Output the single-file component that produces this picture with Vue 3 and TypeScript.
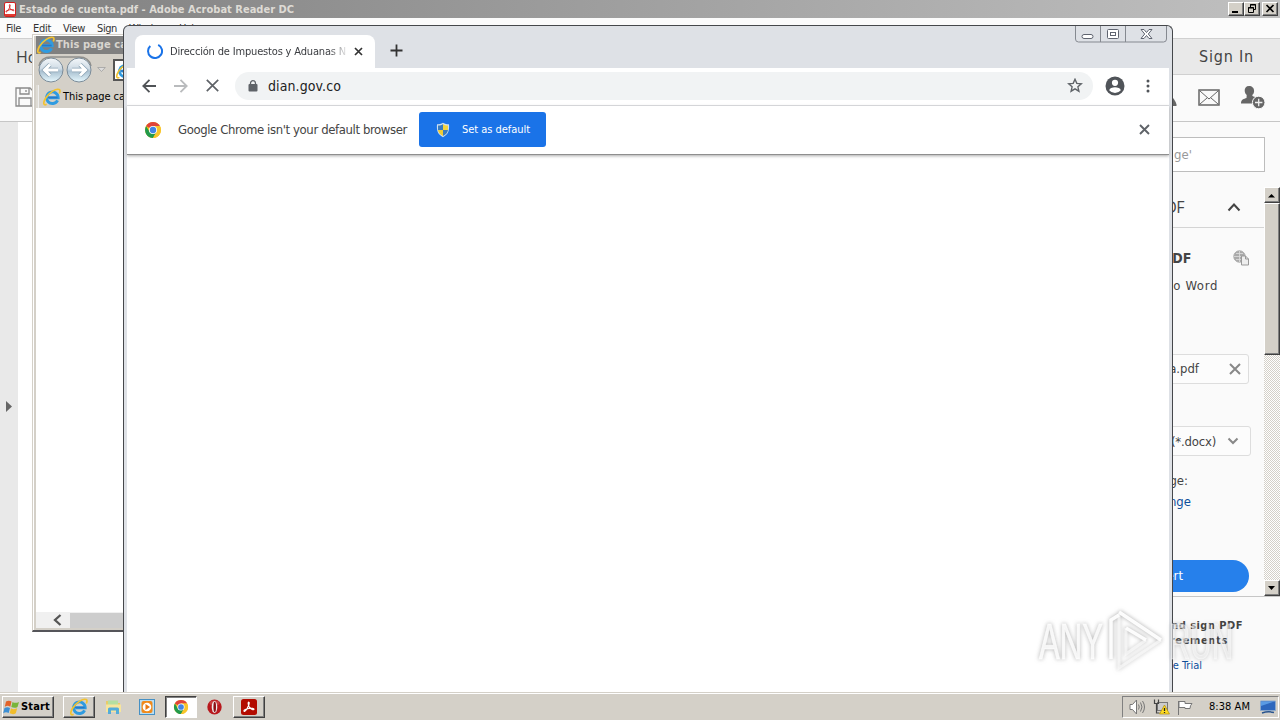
<script setup lang="ts">
interface MenuItem { label: string; width: number }

const menus: MenuItem[] = [
  { label: 'File', width: 15 },
  { label: 'Edit', width: 18 },
  { label: 'View', width: 22 },
  { label: 'Sign', width: 20 },
  { label: 'Window', width: 38 },
  { label: 'Help', width: 20 },
]

// Tracks a label so that it spans the given number of pixels.
function fit(el: HTMLElement, width: number) {
  el.style.letterSpacing = '0px'
  const natural = el.getBoundingClientRect().width
  const count = (el.textContent ?? '').length
  if (count > 0) el.style.letterSpacing = `${(width - natural) / count}px`
}
const vFit = { mounted: (el: HTMLElement, b: { value: number }) => fit(el, b.value) }
</script>

<template>
  <div class="desktop">
    <svg class="defs" width="0" height="0">
      <defs>
        <linearGradient id="ball" x1="0" y1="0" x2="0" y2="1">
          <stop offset="0" stop-color="#f4f7fa" /><stop offset=".45" stop-color="#cfdbe5" />
          <stop offset=".55" stop-color="#a9c0d0" /><stop offset="1" stop-color="#e6f8fe" />
        </linearGradient>
        <symbol id="ie" viewBox="0 0 18 18">
          <path d="M14.600 12.300A5.800 5.800 0 1 1 15.200 9.700H5.500" fill="none" stroke="#2f9be0" stroke-width="2.900" />
          <path d="M14.600 9.500H5" stroke="#2878c8" stroke-width="1.600" />
          <path d="M3.600 16.300C.2 18.200 0 14.500 2.400 10.500 5.800 4.800 12.800.2 16.200 1.500c1.400.7.800 2.400.1 4" fill="none" stroke="#f2c230" stroke-width="1.700" />
        </symbol>
        <symbol id="chrome" viewBox="0 0 18 18">
          <circle cx="9" cy="9" r="8" fill="#fbc116" />
          <path d="M9 9 2.100 5A8 8 0 0 1 15.900 5H9z" fill="#e0443a" />
          <path d="M9 9 5.600 11 2.100 5A8 8 0 0 0 9 17l3.400-6z" fill="#229a4c" />
          <path d="M9 5h6.900A8 8 0 0 1 9 17l3.400-6z" fill="#f7c52c" />
          <circle cx="9" cy="9" r="4" fill="#fff" /><circle cx="9" cy="9" r="3.200" fill="#4285e4" />
        </symbol>
        <symbol id="pdf" viewBox="0 0 18 18">
          <path d="M8.700 3.600c1.400.2-.1 4.100-1.800 7-1.300 2.200-3.100 4-3.600 3-.5-1.100 2.700-2.400 5.500-2.900 3-.5 6-.2 5.800.9-.3 1.100-3.400.1-5.200-2.400C8.100 7.300 7.600 3.500 8.700 3.600z" fill="none" stroke="currentColor" stroke-width="1.300" />
        </symbol>
      </defs>
    </svg>

    <section class="acrobat">
      <header class="ac-title">
        <svg class="ac-logo" width="12" height="15" viewBox="0 0 12 15"><rect x=".5" y=".5" width="11" height="14" rx="1.500" fill="#fff" stroke="#d21f1f" /><rect x="1" y="12" width="10" height="2" fill="#e23a30" /><use href="#pdf" x="-1" y="0" width="14" height="13" color="#d21f1f" /></svg>
        <span v-fit="275" class="bold">Estado de cuenta.pdf - Adobe Acrobat Reader DC</span>
        <div class="winbtns">
          <i class="raised"><svg width="14" height="12"><path d="M3 9h6" stroke="#000" stroke-width="2" /></svg></i>
          <i class="raised"><svg width="14" height="12"><path d="M5.500 4V1.500h5v5H9M5 2h6M3.500 4.500h5v5h-5zM3 5h6" fill="none" stroke="#000" /></svg></i>
          <i class="raised gap"><svg width="14" height="12"><path d="m3.500 2 7 7m0-7-7 7" stroke="#000" stroke-width="1.700" /></svg></i>
        </div>
      </header>
      <nav class="ac-menu">
        <span v-for="m in menus" :key="m.label" v-fit="m.width">{{ m.label }}</span>
      </nav>
      <div class="ac-tabs"><span class="home">Home</span><span v-fit="55" class="signin">Sign In</span></div>
      <div class="ac-tools">
        <svg class="save" width="20" height="20" viewBox="0 0 20 20" fill="none" stroke="#8a8a8a" stroke-width="1.300"><path d="M1 1h14l4 4v14H1zM5 1v6h9V1M4 19v-8h12v8M11 3v2" /></svg>
        <span class="grow"></span>
        <svg width="12" height="18" viewBox="0 0 12 18"><path d="M5 7q5 4 6.500 9.500V18H0V7z" fill="#666" /></svg>
        <svg class="mail" width="22" height="17" viewBox="0 0 22 17" fill="none" stroke="#666" stroke-width="1.500"><path d="M1 1h20v15H1z" /><path d="m2 2 9 8 9-8M2 15l7-6M20 15l-7-6" stroke-width="1" /></svg>
        <svg class="person" width="25" height="24" viewBox="0 0 25 24"><path d="M9 1c-3 0-4.500 2-4.300 5 .2 2 1 3 2 4l-.2 3C4 14 1 14 1 18.500h12.500l3-6c-1-.2-3-1-4-1.500l-.2-1c1-1 1.800-2 1.800-4C14.200 3 12 1 9 1z" fill="#666" /><circle cx="18.700" cy="17.500" r="6.300" fill="#666" stroke="#fafafa" /><path d="M15 17.500h7.400m-3.700-3.700v7.400" stroke="#eee" stroke-width="1.300" /></svg>
      </div>
      <div class="ac-body">
        <aside class="ac-rail"><svg width="7" height="11"><path d="M1 0v11l6-5.500z" fill="#666" /></svg></aside>
        <main class="ac-doc"></main>
        <aside class="ac-panel">
          <div class="search">ge'</div>
          <div class="p-scroll">
            <div class="p-content">
              <div class="p-head"><span class="pdf-h">PDF</span><svg width="14" height="10"><path d="m1.500 8.500 5.500-6 5.500 6" fill="none" stroke="#444" stroke-width="2" /></svg></div>
              <div class="p-title"><b>PDF</b><svg width="17" height="16" viewBox="0 0 17 16"><circle cx="6.500" cy="6.500" r="5.700" fill="#aaa" stroke="#aaa" /><path d="M1 6.500h11M6.500 1v11M3 3.500h7M3 9.500h7" stroke="#ddd" stroke-width=".8" /><path d="M8.500 6h4l3 3v6h-7z" fill="#eee" stroke="#999" /><path d="M12.500 6v3h3" fill="none" stroke="#999" /></svg></div>
              <div class="p-word"><span v-fit="50">to Word</span></div>
              <div class="p-file"><span>a.pdf</span><svg width="12" height="12"><path d="m1 1 10 10m0-10L1 11" stroke="#888" stroke-width="2" /></svg></div>
              <div class="p-select"><span v-fit="45">(*.docx)</span><svg width="12" height="8"><path d="m1.500 1.500 4.500 4.500 4.500-4.500" fill="none" stroke="#888" stroke-width="2" /></svg></div>
              <div class="p-lang">age:</div>
              <div class="p-change">Change</div>
              <div class="convert">Convert</div>
            </div>
            <div class="vbar"><i class="raised"><svg width="8" height="5"><path d="M0 4.500h7L3.500 1z" /></svg></i><i class="raised thumb"></i><span></span><i class="raised"><svg width="8" height="5"><path d="M0 0h7L3.500 4z" /></svg></i></div>
          </div>
          <footer class="p-foot"><b><span v-fit="79">and sign PDF</span></b><b class="agree"><span v-fit="66">greements</span></b><a>Free Trial</a></footer>
        </aside>
      </div>
    </section>

    <section class="explorer">
      <header class="ie-title"><svg width="18" height="18"><use href="#ie" /></svg><span v-fit="71" class="bold">This page ca</span></header>
      <div class="ie-nav">
        <svg width="56" height="28" viewBox="0 0 56 28">
          <path d="M2 10Q4 1 14 1h28q10 0 12 9" fill="none" stroke="#8f8f8c" stroke-width="1.500" />
          <circle cx="14" cy="14" r="12" fill="url(#ball)" stroke="#7c8c99" /><circle cx="42" cy="14" r="12" fill="url(#ball)" stroke="#7c8c99" />
          <path d="M7 14h14M13 8.500 7.500 14l5.500 5.500" fill="none" stroke="#8aa2b4" stroke-width="4.500" /><path d="M7 14h14M13 8.500 7.500 14l5.500 5.500" fill="none" stroke="#fff" stroke-width="3" />
          <path d="M35 14h14M43 8.500l5.500 5.500-5.500 5.500" fill="none" stroke="#8aa2b4" stroke-width="4.500" /><path d="M35 14h14M43 8.500l5.500 5.500-5.500 5.500" fill="none" stroke="#fff" stroke-width="3" />
        </svg>
        <svg class="drop" width="9" height="6"><path d="M.7.500h7.600l-3.800 4z" fill="#ddd" stroke="#999" stroke-width=".7" /></svg>
        <div class="ie-addr"><svg width="17" height="17"><use href="#ie" /></svg></div>
      </div>
      <div class="ie-tabs"><div class="ie-tab"><svg width="18" height="18"><use href="#ie" /></svg><span v-fit="62">This page ca</span></div></div>
      <div class="ie-page"></div>
      <div class="ie-hbar"><svg width="10" height="12"><path d="M8.500 1 3 6l5.500 5" fill="none" stroke="#555" stroke-width="2.300" /></svg><i></i></div>
    </section>

    <section class="browser">
      <header class="strip">
        <div class="tab">
          <svg class="spin" width="16" height="16" viewBox="0 0 16 16"><path d="M3.300 2.900A7 7 0 1 0 11.200 1.800" fill="none" stroke="#1a73e8" stroke-width="2" /></svg>
          <span class="tabname"><span v-fit="176">Dirección de Impuestos y Aduanas N</span></span>
          <svg class="tabx" width="9" height="9"><path d="m1 1 7 7m0-7-7 7" stroke="#333" stroke-width="1.700" /></svg>
        </div>
        <svg class="plus" width="13" height="13"><path d="M6.500.500v12M.500 6.500h12" stroke="#333" stroke-width="1.800" /></svg>
        <div class="caption">
          <svg width="92" height="17" viewBox="0 0 92 17" fill="none" stroke="#5f6470"><path d="M.500 0v13q0 3 3 3h85q3 0 3-3V0M25.500 0v16M50.500 0v16" stroke="#858990" /><rect x="7" y="8.500" width="11" height="4" rx="2" fill="#fff" /><rect x="32.500" y="3.500" width="11" height="9" rx="1" fill="#fff" /><rect x="35.500" y="6.500" width="5" height="3" /><path d="M66 3.500h3l2.500 3 2.500-3h3l-3.700 4.500 3.700 4.500h-3l-2.500-3-2.500 3h-3L69.700 8z" fill="#fff" /></svg>
        </div>
      </header>
      <div class="inner">
        <div class="toolbar">
          <svg class="b" width="14" height="14" fill="none" stroke="#505357" stroke-width="1.800"><path d="M14 7H1.500M7.500.8 1.300 7l6.200 6.200" /></svg>
          <svg class="f" width="14" height="14" fill="none" stroke="#b9bbbd" stroke-width="1.800"><path d="M0 7h12.500M6.500.8 12.700 7l-6.200 6.200" /></svg>
          <svg class="s" width="13" height="13"><path d="m.8.800 11.400 11.400m0-11.400L.8 12.200" stroke="#5f6368" stroke-width="1.700" /></svg>
          <div class="omni">
            <svg width="10" height="12"><rect x=".5" y="4" width="9" height="7.500" rx="1" fill="#5f6368" /><path d="M2.500 5V3.200a2.500 2.500 0 0 1 5 0V5" fill="none" stroke="#5f6368" stroke-width="1.300" /></svg>
            <span class="url"><span v-fit="73">dian.gov.co</span></span>
            <svg width="16" height="15" viewBox="0 0 16 15"><path d="m8 1.300 1.800 4.100 4.500.4-3.400 3 1 4.400L8 10.900l-3.900 2.300 1-4.400-3.400-3 4.500-.4z" fill="none" stroke="#5f6368" stroke-width="1.400" /></svg>
          </div>
          <svg class="user" width="20" height="20"><circle cx="10" cy="10" r="9.500" fill="#505459" /><circle cx="10" cy="6.800" r="3.100" fill="#fff" /><path d="M4.200 14.200c1-3.800 10.600-3.800 11.600 0a7.500 7.500 0 0 1-11.600 0z" fill="#fff" /></svg>
          <svg class="dots" width="4" height="14" fill="#505459"><circle cx="2" cy="2" r="1.500" /><circle cx="2" cy="7" r="1.500" /><circle cx="2" cy="12" r="1.500" /></svg>
        </div>
        <div class="infobar">
          <svg width="18" height="18"><use href="#chrome" /></svg>
          <span class="msg"><span v-fit="229">Google Chrome isn't your default browser</span></span>
          <button>
            <svg width="14" height="16" viewBox="0 0 14 16"><path d="M7 .7C5 2 3 2.300 1 2.300c-.5 6 .5 10 6 13 5.500-3 6.500-7 6-13-2 0-4-.3-6-1.600z" fill="#cfe0ef" /><path d="M7 2v6H2V3.500C4 3.500 6 3 7 2z" fill="#397cc0" /><path d="M7 2v6h5V3.500C10 3.500 8 3 7 2z" fill="#f5d53e" /><path d="M2 8h5v6C4 12.500 2.300 10.500 2 8z" fill="#f0cc35" /><path d="M12 8H7v6c3-1.500 4.700-3.500 5-6z" fill="#397cc0" /></svg>
            <span v-fit="68">Set as default</span>
          </button>
          <svg class="close" width="11" height="11"><path d="m1 1 9 9m0-9-9 9" stroke="#5f6368" stroke-width="1.900" /></svg>
        </div>
        <div class="page"></div>
      </div>
    </section>

    <footer class="taskbar">
      <div class="raised start">
        <svg width="17" height="17" viewBox="0 0 17 17"><path d="M3 2.500c2-1.300 4-1 5.500 0L7.300 7.700c-2-1.200-3.500-1-5.500 0z" fill="#e2632a" /><path d="M9.500 3c2 1.300 4 1 6.500 0l-1.500 5c-2 1.200-4 1-6.200 0z" fill="#79b53a" /><path d="M1.500 9c2-1.300 4-1 5.500 0l-1.300 5c-2-1-3.500-1-5.500.2z" fill="#3c8fd4" /><path d="M8 9.300c2 1.200 4 1 6.200 0l-1.400 5c-2 1.200-4 1-6.100 0z" fill="#f1bd2b" /></svg>
        <span v-fit="29" class="bold">Start</span>
      </div>
      <div class="raised task ie-task"><svg width="18" height="18"><use href="#ie" /></svg></div>
      <svg class="folder" width="17" height="18" viewBox="0 0 17 18"><path d="M1 3h5l1 2h8v9H1z" fill="#e9cb69" /><path d="M3 2.500h10V8H3z" fill="#b5dfa0" /><path d="M1 6.500h15V14H1z" fill="#f7e59c" /><path d="M3 16v-5q0-1.500 1.500-1.500h8Q14 9.500 14 11v5h-3v-3.500H6V16z" fill="#54acd9" /></svg>
      <svg class="media" width="16" height="16"><rect x=".5" y=".5" width="15" height="15" fill="#b9def3" stroke="#4690c4" /><rect x="2.500" y="2" width="11" height="12" rx="2" fill="#f08a1c" /><circle cx="8" cy="8" r="4.300" fill="#fff" /><path d="m6.500 5 4.500 3-4.500 3z" fill="#e87812" /></svg>
      <div class="task pressed"><svg width="16" height="16"><use href="#chrome" /></svg></div>
      <svg class="opera" width="15" height="16"><ellipse cx="7.500" cy="8" rx="7.200" ry="7.500" fill="#b8181d" /><ellipse cx="7.500" cy="4" rx="5" ry="2.500" fill="#d65757" opacity=".6" /><ellipse cx="7.500" cy="8" rx="2.800" ry="6" fill="#eee" /><ellipse cx="7.700" cy="8" rx="1.300" ry="5.200" fill="#8e0f14" /></svg>
      <div class="raised task ac-task"><svg width="16" height="16"><rect width="16" height="16" rx="2.500" fill="#b30b00" /><use href="#pdf" x="0" y="-.5" width="16" height="17" color="#fff" /></svg></div>
      <div class="tray">
        <svg width="17" height="16" viewBox="0 0 17 16" fill="none" stroke="#777"><path d="M1 5.500h2.500L7.500 1v14l-4-4.500H1z" fill="#fff" /><path d="M9.500 5.500q1.500 2.500 0 5M11.500 3.500q3 4.500 0 9M13.500 2q4 6 0 12" /></svg>
        <svg class="net" width="17" height="16" viewBox="0 0 17 16"><rect x="4.500" y="3.500" width="10" height="8" fill="#ccc" stroke="#777" /><path d="M7 14h5" stroke="#777" /><path d="M1.500.500v4h4v-4M3.500 4.500V14h3" fill="none" stroke="#444" stroke-width="1.200" /><path d="M11.500 6 16.500 15h-10z" fill="#ffdc21" stroke="#ad8b0b" stroke-width=".7" /><path d="M11.500 9v3m0 1v1" stroke="#222" stroke-width="1.300" /></svg>
        <svg class="flag" width="16" height="15" viewBox="0 0 16 15"><path d="M1.500 1v14M2 1.500h6v2h7q-2 2-2 5H8v-1H2z" fill="#fff" stroke="#777" /></svg>
        <span v-fit="41" class="clock">8:38 AM</span>
        <svg class="desk" width="16" height="14" viewBox="0 0 16 14"><path d="M.5 1h15v9.500H.500z" fill="#2d67bd" stroke="#8ba8cb" /><path d="M1 6 14 1.500H1z" fill="#5a9be4" /><path d="M2 13q6-2 12-.5" stroke="#28548e" fill="none" stroke-width="1.500" /></svg>
      </div>
    </footer>

    <svg class="mark" width="202" height="66" viewBox="0 0 202 66">
      <g fill="#fff" font-family="'Liberation Sans', sans-serif" font-size="50">
        <text x="4" y="51" textLength="64" lengthAdjust="spacingAndGlyphs" fill-opacity=".85" stroke="#fff" stroke-opacity=".6">ANY</text>
        <text x="134" y="51" textLength="64" lengthAdjust="spacingAndGlyphs" fill-opacity=".5" stroke="#fff" stroke-opacity=".4">RUN</text>
      </g>
      <path d="M76 51V12l8-5M84 4l42 28M91 20l20 12" fill="none" stroke="#fff" stroke-width="3.500" stroke-opacity=".95" />
      <path d="M126 32 84 60V6M111 32 91 46V20" fill="none" stroke="#fff" stroke-width="3" stroke-opacity=".6" />
    </svg>
  </div>
</template>

<style>
body { margin: 0; overflow: hidden; }
</style>

<style scoped>
* { box-sizing: border-box; }
.desktop { position: relative; width: 1280px; height: 720px; overflow: hidden; background: #fff; font: 11px/14px "DejaVu Sans Condensed", "DejaVu Sans", sans-serif; color: #333; white-space: nowrap; }
.desktop svg { display: block; flex: none; }
.defs { position: absolute; }
.bold { font-weight: 700; }
.grow { flex: 1; }
.raised { display: flex; align-items: center; justify-content: center; background: #d4d0c8; border: 1px solid; border-color: #fff #404040 #404040 #fff; box-shadow: inset -1px -1px #808080; }

.acrobat { height: 692px; display: flex; flex-direction: column; background: #fff; }
.ac-title { height: 18px; flex: none; display: flex; align-items: center; padding: 0 2px 0 4px; background: linear-gradient(90deg, #808080, #c0c0c0); color: #dedbd5; }
.ac-title .bold { margin-top: 1px; }
.ac-logo { margin-right: 3px; }
.winbtns { margin-left: auto; display: flex; }
.winbtns .raised { width: 16px; height: 14px; }
.winbtns .gap { margin-left: 2px; }
.ac-menu { height: 20px; flex: none; display: flex; align-items: center; gap: 12px; padding: 1px 0 0 6px; background: #fbfbfb; }
.ac-tabs { height: 37px; flex: none; display: flex; align-items: center; justify-content: space-between; padding: 0 26px 0 16px; background: #e9e9e9; border-top: 1px solid #d0d0d0; border-bottom: 1px solid #d0d0d0; font-size: 16px; color: #444; }
.home { font-family: "Open Sans", sans-serif; }
.ac-tools { height: 47px; flex: none; display: flex; align-items: center; padding: 0 14px 2px 15px; background: #fafafa; border-bottom: 1px solid #c6c6c6; }
.mail { margin-left: 21px; }
.person { margin: 0 1px 0 20px; }
.ac-body { flex: 1; display: flex; min-height: 0; }
.ac-rail { width: 18px; display: flex; align-items: center; justify-content: center; background: #e9e9e9; padding: 0 2px 2px 0; }
.ac-doc { flex: 1; background: #fff; }
.ac-panel { width: 200px; display: flex; flex-direction: column; background: #fafafa; font-size: 13px; line-height: 16px; color: #444; padding-top: 15px; }
.search { height: 35px; margin: 0 15px 15px 0; padding: 9px 0 0 93px; background: #fff; border: 1px solid #bdbdbd; color: #999; }
.p-scroll { height: 410px; display: flex; border-bottom: 1px solid #c6c6c6; }
.p-content { flex: 1; padding-right: 14px; display: flex; flex-direction: column; }
.p-head { height: 41px; margin-right: -14px; padding: 0 23px 0 76px; display: flex; align-items: center; justify-content: space-between; border-bottom: 1px solid #d4d4d4; }
.pdf-h { font: 16px "Open Sans", sans-serif; letter-spacing: -.5px; width: 26px; }
.p-title { height: 60px; display: flex; align-items: center; justify-content: space-between; padding-left: 83px; font-size: 14px; }
.p-word { height: 64px; margin-top: -12px; padding: 0 32px 0 0; text-align: right; line-height: 20px; font-size: 13px; }
.p-file, .p-select { height: 30px; margin: 14px 1px 0 0; display: flex; align-items: center; justify-content: flex-end; border: 1px solid #ddd; border-radius: 3px; background: #fcfcfc; padding-right: 7px; }
.p-file span { margin-right: 30px; }
.p-select { margin: 42px -1px 0 0; padding-right: 11px; }
.p-select span { margin: 2px 11px 0 0; }
.p-lang { height: 20px; margin-top: 15px; line-height: 20px; text-align: right; padding-right: 62px; }
.p-change { height: 20px; line-height: 22px; text-align: right; padding-right: 59px; color: #0d4f9c; }
.convert { height: 32px; margin: 49px 1px 0 0; line-height: 32px; padding-right: 66px; text-align: right; border-radius: 16px; background: #2680eb; color: #fff; }
.vbar { width: 16px; display: flex; flex-direction: column; background: repeating-conic-gradient(#d4d0c8 0 25%, #fff 0 50%) 0 0 / 2px 2px; }
.vbar .raised { height: 16px; }
.vbar .thumb { height: 152px; }
.vbar span { flex: 1; }
.p-foot { display: flex; flex-direction: column; align-items: flex-end; padding: 21px 37px 0 0; font-size: 11px; }
.p-foot b { height: 15px; }
.p-foot .agree { margin-right: 15px; }
.p-foot a { color: #0d4f9c; font-size: 11px; margin: 10px 41px 0 0; }

.explorer { position: absolute; left: 32px; top: 34px; width: 110px; height: 598px; background: #d4d0c8; border: 1px solid #d4d0c8; border-bottom: 2px solid #55555a; box-shadow: inset 1px 1px #fff; display: flex; flex-direction: column; padding: 1px 0 2px 3px; }
.ie-title { height: 18px; display: flex; align-items: center; gap: 1px; padding-left: 1px; background: #808080; color: #d8d5cf; }
.ie-nav { height: 31px; flex: none; display: flex; align-items: center; padding-left: 1px; }
.drop { margin: 0 7px 0 4px; }
.ie-addr { flex: none; width: 40px; height: 22px; background: #fff; border: 2px solid #555; padding: 1px; }
.ie-tabs { height: 23px; flex: none; display: flex; background: #dedbd4; }
.ie-tab { display: flex; align-items: center; gap: 2px; margin-left: 2px; padding-left: 4px; background: #d4d0c8; border-left: 1px solid #eee; color: #000; }
.ie-page { flex: 1; background: #fff; }
.ie-hbar { height: 16px; display: flex; align-items: center; background: #f0f0f0; padding-left: 16px; }
.ie-hbar i { margin-left: 8px; flex: 1; height: 15px; background: #cdcdcd; }

.browser { position: absolute; left: 123px; top: 25px; width: 1050px; height: 667px; background: #dee1e6; border: 1px solid #45474b; border-bottom: 0; border-radius: 6px 6px 0 0; display: flex; flex-direction: column; padding: 0 2px; overflow: hidden; }
.strip { height: 42px; flex: none; display: flex; align-items: flex-start; padding-left: 9px; }
.tab { width: 240px; height: 33px; margin-top: 9px; display: flex; align-items: center; background: #fff; border-radius: 8px 8px 0 0; padding-left: 12px; color: #3a3c40; }
.spin { margin-top: -1px; }
.tabname { width: 181px; margin-left: 7px; overflow: hidden; }
.tabname > span { -webkit-mask-image: linear-gradient(90deg, #000 158px, rgba(0, 0, 0, .1) 177px); mask-image: linear-gradient(90deg, #000 158px, rgba(0, 0, 0, .1) 177px); }
.tabx { margin: -1px 0 0 3px; }
.plus { margin: 18px 0 0 15px; }
.caption { margin: 0 3px 0 auto; }
.inner { flex: 1; margin: 0 1px; background: #fff; display: flex; flex-direction: column; }
.toolbar { height: 38px; flex: none; display: flex; align-items: center; padding: 0 19px 2px 15px; border-bottom: 1px solid #dcdee1; }
.f { margin-left: 18px; }
.s { margin: 0 16px 0 18px; }
.omni { flex: 1; height: 28px; display: flex; align-items: center; background: #f1f3f4; border-radius: 14px; padding: 0 10px 0 13px; }
.url { flex: 1; margin-left: 10px; font-size: 14px; color: #222; }
.user { margin-left: 12px; }
.dots { margin: 0 0 0 21px; }
.infobar { height: 49px; flex: none; display: flex; align-items: center; padding: 0 19px 1px 17px; border-bottom: 1px solid #8e8e8e; box-shadow: 0 1px 3px #aaa; }
.msg { width: 241px; margin-left: 16px; font-size: 13px; color: #444; }
.infobar button { width: 127px; height: 35px; margin: 0; border: 0; border-radius: 3px; background: #1a73e8; color: #fff; font: inherit; display: flex; align-items: center; padding: 0 17px; gap: 12px; }
.close { margin-left: auto; }
.page { flex: 1; }

.taskbar { position: absolute; left: 0; right: 0; bottom: 0; height: 28px; background: #d4d0c8; border-top: 1px solid #d4d0c8; box-shadow: inset 0 1px #fff; display: flex; align-items: center; padding: 1px 1px 0 2px; color: #000; }
.start { width: 52px; height: 22px; gap: 1px; padding-right: 3px; }
.task { width: 32px; height: 22px; display: flex; align-items: center; justify-content: center; }
.ie-task { margin-left: 9px; }
.folder { margin: 0 16px 0 10px; }
.media { margin: 0 10px 0 1px; }
.pressed { background: #fff; border: 1px solid; border-color: #404040 #fff #fff #404040; box-shadow: inset 1px 1px #808080; }
.opera { margin: 0 11px 0 10px; }
.tray { width: 157px; height: 22px; margin-left: auto; display: flex; align-items: center; border: 1px solid; border-color: #808080 #fff #fff #808080; padding-left: 6px; }
.net { margin-left: 7px; }
.flag { margin-left: 7px; }
.clock { margin-left: 16px; }
.desk { margin-left: 10px; }
.mark { position: absolute; left: 1035px; top: 608px; filter: drop-shadow(0 0 2px rgba(90, 90, 90, .55)); }
</style>
